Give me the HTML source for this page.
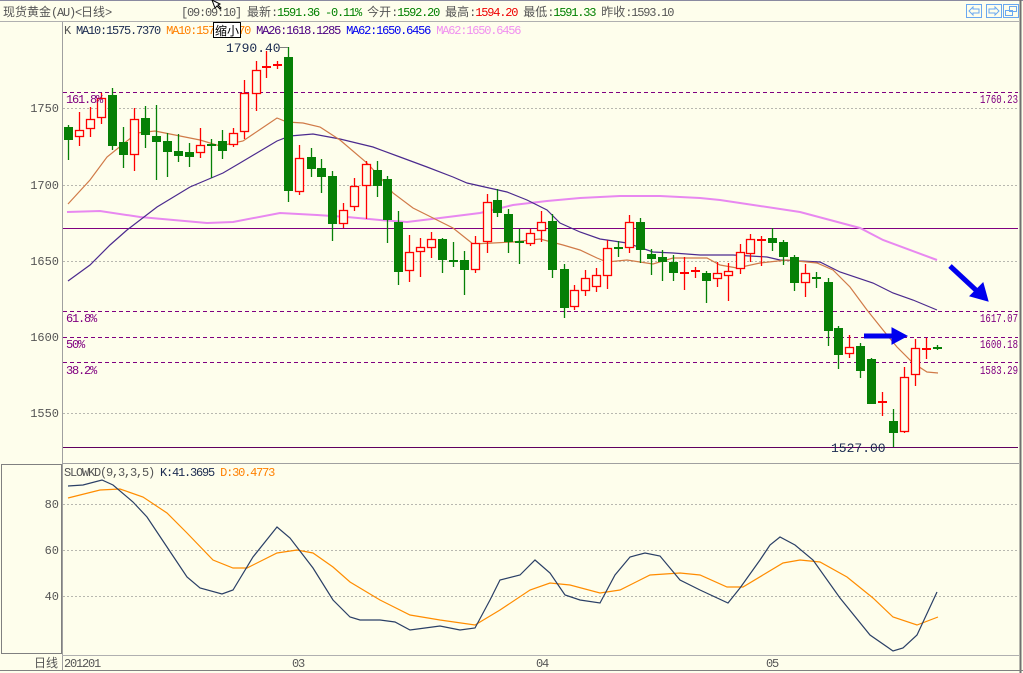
<!DOCTYPE html>
<html><head><meta charset="utf-8"><style>
html,body{margin:0;padding:0;background:#fefeec;}
body{width:1023px;height:673px;overflow:hidden;position:relative;font-family:"Liberation Mono","Noto Sans CJK SC",monospace;}
svg{position:absolute;left:0;top:0;}
text{font-family:"Liberation Mono","Noto Sans CJK SC",monospace;}
.m{font-size:12px;letter-spacing:-1.2px;}
.cj{font-family:"Noto Sans CJK SC","WenQuanYi Zen Hei",sans-serif;letter-spacing:0;}
</style></head><body>
<svg id="s" width="1023" height="673" viewBox="0 0 1023 673" xmlns="http://www.w3.org/2000/svg">
<rect x="0" y="0" width="1023" height="673" fill="#fefeec"/>
<line x1="0" y1="0.5" x2="1023" y2="0.5" stroke="#8a8aa0"/>
<line x1="0" y1="21.5" x2="1019" y2="21.5" stroke="#b0b0b0"/>
<line x1="1020.5" y1="0" x2="1020.5" y2="673" stroke="#707070" stroke-width="2"/>
<line x1="62.5" y1="22" x2="62.5" y2="670" stroke="#a0a0a0"/>
<line x1="62" y1="463.5" x2="1019" y2="463.5" stroke="#a0a0a0"/>
<line x1="62" y1="655.5" x2="1019" y2="655.5" stroke="#b0b0b0"/>
<line x1="0" y1="670.5" x2="1023" y2="670.5" stroke="#808080"/>
<rect x="1.5" y="464.5" width="60" height="189" fill="none" stroke="#808080"/>
<g stroke="#b8b8b0" stroke-dasharray="2,2">
<line x1="63" y1="108.5" x2="1018" y2="108.5"/>
<line x1="63" y1="185.5" x2="1018" y2="185.5"/>
<line x1="63" y1="261.5" x2="1018" y2="261.5"/>
<line x1="63" y1="413.5" x2="1018" y2="413.5"/>
<line x1="63" y1="504.5" x2="1018" y2="504.5"/>
<line x1="63" y1="550.5" x2="1018" y2="550.5"/>
<line x1="63" y1="596.5" x2="1018" y2="596.5"/>
</g>
<g stroke="#800080" stroke-dasharray="4,3">
<line x1="63" y1="92.5" x2="1018" y2="92.5"/>
<line x1="63" y1="311.5" x2="1018" y2="311.5"/>
<line x1="63" y1="337.5" x2="1018" y2="337.5"/>
<line x1="63" y1="362.5" x2="1018" y2="362.5"/>
</g>
<line x1="63" y1="228.5" x2="1018" y2="228.5" stroke="#800080"/>
<line x1="63" y1="447.5" x2="1018" y2="447.5" stroke="#600060"/>
<polyline fill="none" stroke="#e888f0" stroke-width="2" points="67,212 100,211 140,217 207,223 233,222 280,213 317,215 347,217 380,220 407,222 440,218 480,213 513,205 547,201 580,198 620,196 660,196 700,198 720,200 760,206 800,212 830,220 860,228 883,240 937,260"/>
<polyline fill="none" stroke="#4b2a8e" stroke-width="1.2" points="68,281 90,265 110,245 127,230 157,207 190,187 223,173 240,163 277,141 290,136 313,134 340,139 373,147 400,157 427,167 453,177 467,183 507,192 527,200 547,210 560,223 580,232 600,239 627,243 653,252 673,253 700,255 733,255 767,257 780,260 800,261 820,262 840,272 873,283 893,293 913,300 937,310"/>
<polyline fill="none" stroke="#d07a48" stroke-width="1.2" points="68,204 90,180 107,157 137,133 155,131 200,140 220,146 243,141 277,118 287,122 303,123 320,127 340,140 367,163 380,177 393,193 413,208 437,220 453,228 473,244 493,243 513,242 540,239 563,245 580,250 597,258 607,262 627,260 653,264 673,258 707,258 720,265 737,268 760,263 787,260 817,263 833,270 850,287 867,310 883,330 897,347 913,363 927,372 938,373"/>
<g id="cd"></g>
<polyline fill="none" stroke="#ff8c00" stroke-width="1.2" points="68,498 100,490 120,489 143,497 167,513 187,533 213,560 233,568 247,568 277,553 297,550 313,553 333,567 350,582 380,600 410,615 440,620 475,625 500,610 530,590 550,583 570,585 600,593 620,590 650,575 680,573 700,575 727,587 743,587 783,563 800,560 820,562 847,577 873,598 893,617 917,625 938,617"/>
<polyline fill="none" stroke="#2a3f66" stroke-width="1.2" points="68,486 83,485 102,480 113,485 133,502 147,517 167,547 187,577 200,588 222,594 233,590 253,557 277,527 290,538 313,568 333,600 350,617 360,620 380,620 395,622 410,630 425,628 440,626 460,630 475,628 490,600 500,580 520,575 535,560 550,573 565,595 580,600 600,603 615,575 630,557 645,553 660,556 680,580 700,590 728,603 740,588 760,560 770,545 780,537 795,545 813,560 840,598 870,635 893,651 903,648 917,635 937,592"/>
<g fill="#0000ee" stroke="#0000ee">
<line x1="950" y1="266" x2="978" y2="292" stroke-width="5"/>
<polygon points="970,296 983,283 988,301" stroke-width="1"/>
<line x1="864" y1="336" x2="898" y2="336" stroke-width="5"/>
<polygon points="892,328 892,344 907,336" stroke-width="1"/>
</g>
<g font-size="12" fill="#555" text-anchor="end" font-family="Liberation Sans,sans-serif">
<text x="59" y="112">1750</text><text x="59" y="189">1700</text><text x="59" y="265">1650</text><text x="59" y="341">1600</text><text x="59" y="417">1550</text>
<text x="59" y="508">80</text><text x="59" y="554">60</text><text x="59" y="600">40</text>
</g>
<g fill="#800080" class="m">
<text x="66" y="103">161.8%</text><text x="66" y="322">61.8%</text><text x="66" y="348">50%</text><text x="66" y="374">38.2%</text>
</g>
<g fill="#800080" font-size="12">
<text x="980" y="103" textLength="38" lengthAdjust="spacingAndGlyphs">1760.23</text>
<text x="980" y="322" textLength="38" lengthAdjust="spacingAndGlyphs">1617.07</text>
<text x="980" y="348" textLength="38" lengthAdjust="spacingAndGlyphs">1600.18</text>
<text x="980" y="374" textLength="38" lengthAdjust="spacingAndGlyphs">1583.29</text>
</g>
<g font-size="13" fill="#1a2a50">
<text x="226" y="52">1790.40</text><text x="831" y="452">1527.00</text>
</g>
<line x1="280" y1="47.5" x2="288" y2="47.5" stroke="#808080"/>
<g class="m">
<text x="3" y="16" fill="#555"><tspan class="cj">现货黄金</tspan>(AU)&lt;<tspan class="cj">日线</tspan>&gt;</text>
<text x="181" y="16" fill="#555">[09:09:10] <tspan class="cj">最新</tspan>:<tspan fill="#008000">1591.36 -0.11%</tspan> <tspan class="cj">今开</tspan>:<tspan fill="#008000">1592.20</tspan> <tspan class="cj">最高</tspan>:<tspan fill="#ee0000">1594.20</tspan> <tspan class="cj">最低</tspan>:<tspan fill="#008000">1591.33</tspan> <tspan class="cj">昨收</tspan>:1593.10</text>
<text x="64" y="34" fill="#555">K <tspan fill="#1a2a50">MA10:1575.7370</tspan> <tspan fill="#ff8000">MA10:1575.7370</tspan> <tspan fill="#4b0082">MA26:1618.1285</tspan> <tspan fill="#0000ee">MA62:1650.6456</tspan> <tspan fill="#f090f0">MA62:1650.6456</tspan></text>
<text x="64" y="476" fill="#555">SLOWKD(9,3,3,5) <tspan fill="#1a2a50">K:41.3695</tspan> <tspan fill="#ff8000">D:30.4773</tspan></text>
<text x="64" y="667" fill="#555">201201</text><text x="292" y="667" fill="#555">03</text><text x="536" y="667" fill="#555">04</text><text x="766" y="667" fill="#555">05</text>
<text x="34" y="667" fill="#555" class="cj">日线</text>
</g>
<rect x="213.5" y="22.5" width="27" height="15" fill="#fff" stroke="#000"/>
<text x="215" y="35" font-size="12" class="cj" fill="#000">缩小</text>
<g fill="none" stroke="#6aa8f0">
<rect x="966.5" y="4.5" width="15" height="13"/><rect x="986.5" y="4.5" width="15" height="13"/><rect x="1003.5" y="4.5" width="15" height="13"/>
<path d="M969,11 L973,7 L973,9 L979,9 L979,13 L973,13 L973,15 Z"/>
<path d="M999,11 L995,7 L995,9 L989,9 L989,13 L995,13 L995,15 Z"/>
<rect x="1009.5" y="6.5" width="7" height="5"/><rect x="1005.5" y="10.5" width="7" height="5"/>
</g>
<path d="M212,0 l3,8 2,-2 3,3 1,-1 -3,-3 2,-1 z" fill="#fff" stroke="#000"/>
</svg>
<script>
var D=[
[68,'g',127,140,125,160],[79,'r',130,137,112,146],[90,'r',119,129,107,137],[101,'r',98,118,93,124],[112,'g',95,146,88,150],
[123,'g',142,155,127,168],[134,'r',119,155,108,171],[145,'g',118,135,106,148],[156,'g',136,142,105,180],[167,'g',141,152,133,177],
[178,'g',151,156,134,162],[189,'g',152,157,143,167],[200,'r',145,153,128,158],[211,'g',144,146,139,178],[222,'g',141,151,130,159],
[233,'r',133,145,128,147],[244,'r',93,132,80,139],[256,'r',70,94,61,111],[266,'r',66,68,51,78],[277,'r',64,66,61,69],
[288,'g',57,191,47,202],[299,'r',158,192,145,195],[311,'g',157,169,148,177],[321,'g',168,177,159,193],[332,'g',176,224,171,241],
[343,'r',210,224,203,228],[354,'r',186,207,178,211],[366,'r',164,186,161,219],[377,'g',170,186,161,197],[387,'g',179,220,176,243],
[398,'g',222,272,211,285],[409,'r',252,271,235,282],[420,'r',247,252,238,277],[431,'r',239,248,232,258],[442,'g',239,260,238,273],
[453,'g',260,262,242,267],[464,'g',260,270,251,295],[475,'r',243,270,236,273],[487,'r',202,242,194,253],[497,'g',200,213,189,217],
[508,'g',214,242,209,253],[519,'g',241,243,229,264],[530,'r',233,244,229,246],[541,'r',222,231,211,242],[552,'g',221,270,214,278],
[564,'g',269,308,264,318],[574,'r',290,307,285,310],[585,'r',278,291,270,296],[596,'r',275,287,268,292],[607,'r',248,276,240,289],
[618,'g',247,249,241,257],[629,'r',222,248,215,253],[640,'g',222,250,218,263],[651,'g',254,259,249,275],[662,'g',257,262,250,281],
[673,'g',262,273,255,281],[684,'r',272,274,257,290],[695,'r',270,272,267,278],[706,'g',273,281,271,303],[717,'r',273,279,262,287],
[728,'r',271,276,263,301],[740,'r',252,269,244,274],[750,'r',239,254,234,262],[761,'r',239,241,236,266],[772,'g',238,243,228,251],
[783,'g',242,257,240,265],[794,'g',257,283,255,291],[805,'r',273,283,264,297],[816,'g',277,279,272,288],[828,'g',282,331,278,346],
[838,'g',328,355,326,369],[849,'r',347,354,335,358],[860,'g',346,371,343,378],[871,'g',359,404,358,404],[882,'r',401,403,392,416],
[893,'g',421,433,409,447],[904,'r',377,432,367,433],[915,'r',348,375,339,386],[926,'r',348,350,338,359],[937,'g',347,349,345,350]];
var g=document.getElementById('cd'),h='';
D.forEach(function(d){var x=d[0],c=d[1]=='g'?'#068006':'#ff0000',t=d[2],b=d[3];
h+='<line x1="'+(x+.5)+'" y1="'+d[4]+'" x2="'+(x+.5)+'" y2="'+d[5]+'" stroke="'+c+'" stroke-width="1.3"/>';
if(b-t<3){h+='<rect x="'+(x-4)+'" y="'+t+'" width="9" height="2" fill="'+c+'"/>';}
else if(d[1]=='g'){h+='<rect x="'+(x-4)+'" y="'+t+'" width="9" height="'+(b-t)+'" fill="'+c+'"/>';}
else{h+='<rect x="'+(x-3.5)+'" y="'+(t+.5)+'" width="8" height="'+(b-t-1)+'" fill="#fefeec" stroke="'+c+'" stroke-width="1.3"/>';}
});
g.innerHTML=h;
</script>
</body></html>
